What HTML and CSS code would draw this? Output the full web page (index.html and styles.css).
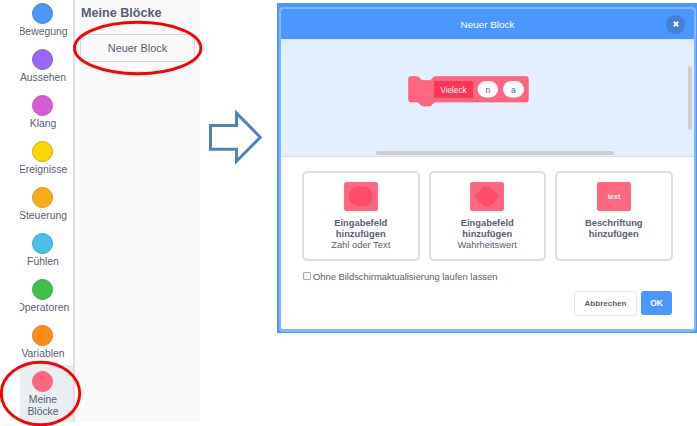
FILE: index.html
```html
<!DOCTYPE html>
<html lang="de">
<head>
<meta charset="utf-8">
<title>Neuer Block</title>
<link rel="stylesheet" href="styles.css">
</head>
<body>
<main class="page">
  <section class="palette">
    <nav class="categories">
      <div class="category"><i class="dot motion"></i><span>Bewegung</span></div>
      <div class="category"><i class="dot looks"></i><span>Aussehen</span></div>
      <div class="category"><i class="dot sound"></i><span>Klang</span></div>
      <div class="category"><i class="dot events"></i><span>Ereignisse</span></div>
      <div class="category"><i class="dot control"></i><span>Steuerung</span></div>
      <div class="category"><i class="dot sensing"></i><span>Fühlen</span></div>
      <div class="category"><i class="dot operators"></i><span>Operatoren</span></div>
      <div class="category"><i class="dot variables"></i><span>Variablen</span></div>
      <div class="category selected"><i class="dot custom"></i><span>Meine<br>Blöcke</span></div>
    </nav>
    <div class="flyout">
      <h2>Meine Blöcke</h2>
      <div class="new-block">Neuer Block</div>
    </div>
  </section>

  <svg class="arrow" width="54" height="56" viewBox="0 0 54 56"><path d="M2.5 16.5H28.5V4.2L52.3 28.3L28.5 52.2V40.3H2.5Z" fill="#fff" stroke="#4f81bd" stroke-width="3"/></svg>

  <section class="backdrop">
    <div class="modal">
      <header class="modal-header">
        <span>Neuer Block</span>
        <div class="close"><svg width="6" height="6" viewBox="0 0 6 6"><path d="M.8 .8L5.200 5.200M5.200 .8L.8 5.200" stroke="#fff" stroke-width="2"/></svg></div>
      </header>
      <div class="workspace">
        <svg class="block" width="122" height="32" viewBox="0 0 122 32">
          <path d="M2.5 .6H8C10 .6 11 1.5 12 2.6C13 4 14 4.6 16 4.6H20.5C22.500 4.600 23.400 4 24.400 2.600C25.400 1.300 26.300 .6 28 .6H118.300Q120.300 .6 120.300 2.600V24Q120.300 26 118.300 26H28C26.300 26 25.400 26.700 24.400 28C23.400 29.400 22.500 30 20.500 30H16C14 30 13 29.400 12 28C11 26.700 10 26 8 26H2.500Q.6 26 .6 24V2.600Q.6 .6 2.500 .6Z" fill="#ff6680" stroke="#ff4d6a" stroke-opacity=".55"/>
          <rect x="26" y="5" width="39" height="16.700" fill="#ff3355"/>
          <rect x="69.500" y="5" width="20.500" height="16.500" rx="8.250" fill="#fff"/>
          <rect x="95" y="5" width="21" height="16.500" rx="8.250" fill="#fff"/>
          <text x="45.500" y="16.600" class="block-name">Vieleck</text>
          <text x="79.800" y="16.800" class="block-arg">n</text>
          <text x="105.300" y="16.800" class="block-arg">a</text>
        </svg>
        <i class="scroll-v"></i>
        <i class="scroll-h"></i>
      </div>
      <div class="body">
        <div class="cards">
          <div class="card">
            <svg width="34" height="29" viewBox="0 0 34 29"><rect x=".5" y=".5" width="33" height="28" rx="1.500" fill="#ff6680" stroke="#ff4d6a" stroke-opacity=".7"/><rect x="5" y="5" width="23.600" height="18.500" rx="9.200" fill="#ff4d6a" stroke="#f24867" stroke-width=".7"/></svg>
            <b>Eingabefeld<br>hinzufügen</b><span>Zahl oder Text</span>
          </div>
          <div class="card">
            <svg width="34" height="29" viewBox="0 0 34 29"><rect x=".5" y=".5" width="33" height="28" rx="1.500" fill="#ff6680" stroke="#ff4d6a" stroke-opacity=".7"/><path d="M5 14.300L13 6Q14 5 15.300 5H18.500Q20 5 21 6L28.700 14.300L21 22.800Q20 23.800 18.500 23.800H15.300Q14 23.800 13 22.800Z" fill="#ff4d6a" stroke="#f24867" stroke-width=".7"/></svg>
            <b>Eingabefeld<br>hinzufügen</b><span>Wahrheitswert</span>
          </div>
          <div class="card">
            <svg width="34" height="29" viewBox="0 0 34 29"><rect x=".5" y=".5" width="33" height="28" rx="1.500" fill="#ff6680" stroke="#ff4d6a" stroke-opacity=".7"/><text x="17" y="16.500" class="label-icon">text</text></svg>
            <b>Beschriftung<br>hinzufügen</b>
          </div>
        </div>
        <div class="option"><i class="checkbox"></i><span>Ohne Bildschirmaktualisierung laufen lassen</span></div>
        <div class="actions"><div class="button cancel">Abbrechen</div><div class="button ok">OK</div></div>
      </div>
    </div>
  </section>

  <svg class="marks" width="697" height="426" viewBox="0 0 697 426" fill="none" stroke="#f00" stroke-width="2.900">
    <ellipse cx="137.700" cy="48" rx="63.200" ry="25.700"/>
    <ellipse cx="40.500" cy="393.500" rx="39.200" ry="31.300"/>
  </svg>
</main>
</body>
</html>
```
FILE: styles.css
```css
* { box-sizing: border-box; }
body {
  margin: 0;
  background: #fff;
  color: #575e75;
  font-family: "Liberation Sans", Arial, sans-serif;
}
.page {
  position: relative;
  display: flex;
  align-items: flex-start;
  width: 697px;
  height: 426px;
  padding-left: 20px;
  overflow: hidden;
}
svg { display: block; flex: none; }

.palette { display: flex; width: 180px; height: 422px; overflow: hidden; }
.categories { width: 55px; height: 425px; margin-top: -3px; border-right: 2px solid #dfdfdf; overflow: hidden; }
.category {
  display: flex;
  flex-direction: column;
  align-items: center;
  width: 53px;
  height: 46px;
  padding: 6px 0 0;
  font-size: 10.4px;
  line-height: 12px;
  text-align: center;
}
.category span { margin: 2px -6px 0; padding-right: 7px; white-space: nowrap; }
.selected { height: 60px; background: #e9eef2; }
.dot { flex: none; width: 21px; height: 21px; margin-right: 8px; border: 1px solid; border-radius: 50%; }
.motion { background: #4c97ff; border-color: #3f80dc; }
.looks { background: #9966ff; border-color: #855cd6; }
.sound { background: #d65cd6; border-color: #c252c2; }
.events { background: #ffd500; border-color: #d2aa00; }
.control { background: #ffab19; border-color: #d89318; }
.sensing { background: #4cbfe6; border-color: #3aa0c8; }
.operators { background: #40bf4a; border-color: #3aa747; }
.variables { background: #ff8c1a; border-color: #e07c12; }
.custom { background: #ff6680; border-color: #f66480; }

.flyout {
  width: 125px;
  padding: 4px 5px 0;
  background: #f9f9f9 radial-gradient(circle, #f4f4f4 .7px, transparent 1px) 4.5px -9.500px / 27.200px 27.200px;
}
.flyout h2 { margin: 0 0 12px 1px; font-size: 12.600px; line-height: 18px; white-space: nowrap; }
.new-block {
  width: 115px;
  height: 28px;
  border: 1px solid #d6d6d6;
  border-radius: 3px;
  font-size: 10.900px;
  line-height: 26px;
  text-align: center;
}
.arrow { margin: 109px 15px 0 8px; }

.backdrop { width: 420px; height: 330px; margin-top: 3px; padding: 4px 1px 1px 2px; background: #4c97ff; }
.modal {
  height: 325px;
  border: 2px solid #82b6ff;
  border-bottom-width: 3px;
  border-radius: 4px;
  background: #fff;
  overflow: hidden;
}
.modal-header {
  display: flex;
  align-items: center;
  justify-content: flex-end;
  height: 30px;
  padding-right: 9px;
  background: #4c97ff;
  color: #fff;
  font-size: 9.900px;
}
.modal-header > span { flex: 1; padding-left: 28px; text-align: center; }
.close { display: flex; align-items: center; justify-content: center; width: 19px; height: 19px; border-radius: 50%; background: #447fd0; }
.workspace { position: relative; height: 118px; padding: 36px 0 0 127px; border-top: 1px solid #d6e5f8; border-bottom: 1px solid #d5dfeb; background: #e3efff; }
.block-name, .block-arg, .label-icon { text-anchor: middle; font-size: 8.200px; fill: #fff; }
.block-arg { font-size: 8.500px; fill: #575e75; }
.label-icon { font-weight: 700; font-size: 7px; }
.scroll-v, .scroll-h { position: absolute; border-radius: 2px; background: #cecece; }
.scroll-v { top: 26px; right: 2px; width: 4px; height: 64px; }
.scroll-h { bottom: 1px; left: 95px; width: 238px; height: 4px; }

.body { padding: 14px 22px 0 21px; }
.cards { display: flex; gap: 9px; width: 371px; }
.card {
  display: flex;
  flex-direction: column;
  align-items: center;
  width: 117.500px;
  height: 90px;
  padding-top: 9px;
  border: 2px solid #dfdfdf;
  border-radius: 5px;
  font-size: 9.350px;
  line-height: 11px;
  text-align: center;
}
.card b { margin-top: 7px; }
.option { display: flex; align-items: center; gap: 2px; height: 12px; margin-top: 9px; padding-left: 1px; font-size: 9.400px; white-space: nowrap; }
.checkbox { width: 8px; height: 8px; border: 1px solid #aaa; border-radius: 1px; background: #fff; }
.actions { display: flex; justify-content: flex-end; gap: 4px; margin-top: 9px; }
.button { height: 25px; border-radius: 3px; font-size: 8px; font-weight: 700; line-height: 23px; text-align: center; }
.cancel { width: 63px; border: 1px solid #e8e8e8; }
.ok { width: 31px; height: 24px; background: #4c97ff; color: #fff; line-height: 24px; font-size: 8.500px; }

.marks { position: absolute; top: 0; left: 0; }
```
